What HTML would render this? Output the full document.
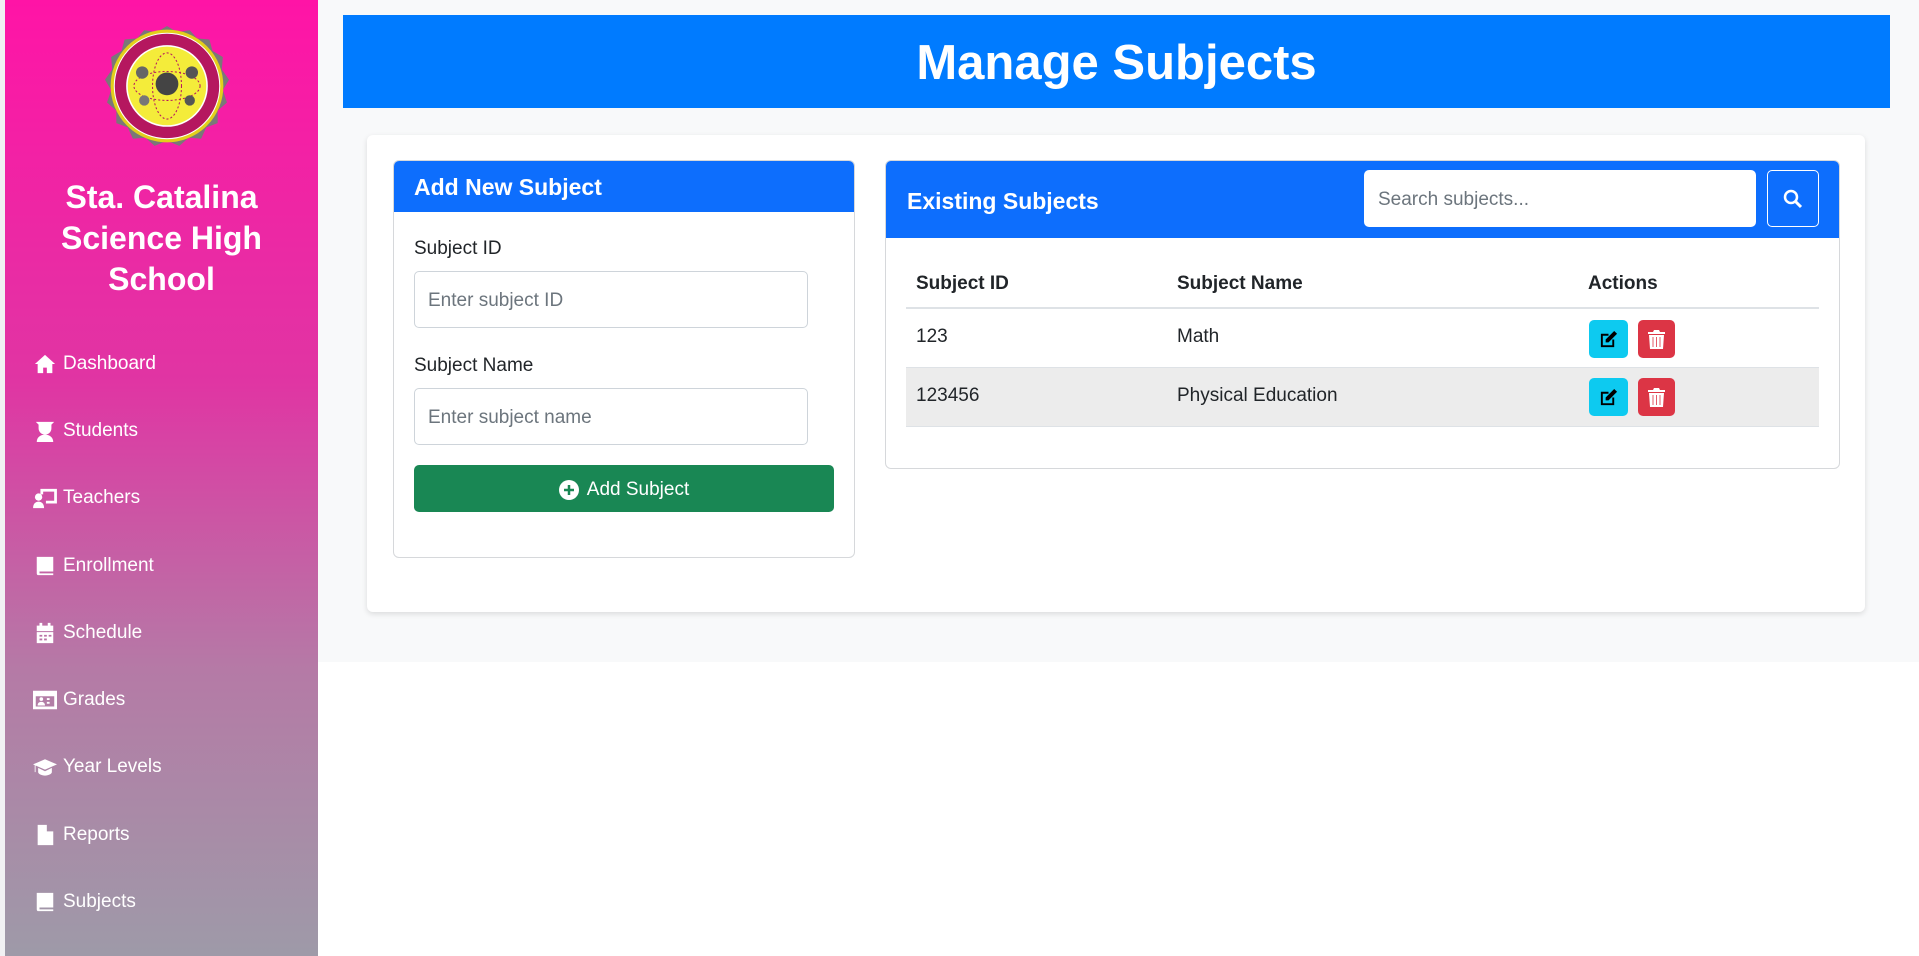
<!DOCTYPE html>
<html><head><meta charset="utf-8"><style>
*{box-sizing:border-box;margin:0;padding:0}
body{width:1919px;height:956px;overflow:hidden;background:#fff;font-family:"Liberation Sans",sans-serif;position:relative;color:#212529}
.strip{position:absolute;left:0;top:0;width:5px;height:956px;background:#f1f1f3}
.side{position:absolute;left:5px;top:0;width:313px;height:956px;background:linear-gradient(#ff14a6,#e035a3 40%,#b57aa6 70%,#9e9aa8)}
.side h2{position:absolute;top:177px;left:0;width:313px;text-align:center;color:#fff;font-size:32px;line-height:41px;font-weight:bold}
.nav{position:absolute;left:33px;color:#fff;font-size:19px;display:flex;align-items:center;gap:6px}
.nav svg{width:24px;height:22px;fill:#fff;flex:none}
.mainbg{position:absolute;left:318px;top:0;width:1601px;height:662px;background:#f8f9fa}
.hdr{position:absolute;left:343px;top:15px;width:1547px;height:93px;background:#007bff;color:#fff;font-size:49px;font-weight:bold;text-align:center;line-height:96px}
.card{position:absolute;left:367px;top:135px;width:1498px;height:477px;background:#fff;border-radius:6px;box-shadow:0 2px 6px rgba(0,0,0,.12)}
.c{position:absolute;border:1px solid #d6d8db;border-radius:6px;background:#fff;overflow:hidden}
.ch{background:#0d6efd;color:#fff;font-weight:bold;font-size:23px}
label{position:absolute;left:414px;font-size:19px}
.inp{position:absolute;border:1px solid #ced4da;border-radius:5px;background:#fff;color:#6c757d;font-size:19px;padding-left:13px;padding-top:3px;display:flex;align-items:center}
.btn{position:absolute;border-radius:5px}
.t{position:absolute;font-size:19px}
</style></head><body>
<div class="strip"></div>
<div class="side">
<svg style="position:absolute;left:92px;top:26px" width="140" height="122" viewBox="0 0 128 118">
<polygon points="64,0 74,6 86,4 93,12 105,13 108,24 118,30 117,42 124,52 118,62 122,74 113,82 113,94 102,98 97,109 85,108 76,116 64,111 52,116 43,108 31,109 26,98 15,94 15,82 6,74 10,62 4,52 11,42 10,30 20,24 23,13 35,12 42,4 54,6" fill="#7a7878"/>
<circle cx="64" cy="58" r="53" fill="#fff" stroke="#e3cf1a" stroke-width="3"/>
<circle cx="64" cy="58" r="45" fill="none" stroke="#b5175f" stroke-width="11"/>
<circle cx="64" cy="58" r="38" fill="#f4ec3a"/>
<ellipse cx="64" cy="58" rx="32" ry="14" fill="none" stroke="#b5175f" stroke-dasharray="2 2"/>
<ellipse cx="64" cy="58" rx="14" ry="32" fill="none" stroke="#b5175f" stroke-dasharray="2 2"/>
<circle cx="64" cy="56" r="11" fill="#444"/>
<circle cx="40" cy="45" r="6" fill="#666"/><circle cx="88" cy="45" r="6" fill="#555"/><circle cx="42" cy="72" r="5" fill="#777"/><circle cx="86" cy="72" r="5" fill="#555"/>
</svg>
<h2>Sta. Catalina<br>Science High<br>School</h2>
</div>
<div class="nav" style="top:353px"><svg viewBox="0 0 24 24"><path d="M12 2 1 12h3v10h6v-6h4v6h6V12h3z"/></svg>Dashboard</div>
<div class="nav" style="top:420px"><svg viewBox="0 0 24 24"><path d="M2 2h20l-3 3v4a7 7 0 0 1-14 0V5zM3 24c0-5 4-8 9-8s9 3 9 8z"/></svg>Students</div>
<div class="nav" style="top:487px"><svg viewBox="0 0 26 24"><circle cx="6" cy="11" r="4"/><path d="M0 23c0-5 3-7 6-7s6 2 6 7zM8 2h18v16H14v-3h9V5H11v3H8z"/></svg>Teachers</div>
<div class="nav" style="top:555px"><svg viewBox="0 0 24 24"><path d="M3 2h18v16H6v2h15v2H5a2 2 0 0 1-2-2zM7 6h10v2H7zm0 4h10v2H7z"/></svg>Enrollment</div>
<div class="nav" style="top:622px"><svg viewBox="0 0 24 24"><path d="M6 1h3v3h6V1h3v3h3v6H3V4h3zM3 11h18v12H3zm3 3v2h3v-2zm5 0v2h3v-2zm5 0v2h3v-2zm-10 4v2h3v-2zm5 0v2h3v-2z"/></svg>Schedule</div>
<div class="nav" style="top:689px"><svg viewBox="0 0 26 22"><path d="M0 1h26v20H0zM3 7v11h20V7zm2 10c0-3 2-4 4-4s4 1 4 4zm4-5a2 2 0 1 1 0-4 2 2 0 0 1 0 4zm6-3h3v2h-3zm0 4h3v2h-3z"/></svg>Grades</div>
<div class="nav" style="top:756px"><svg viewBox="0 0 28 22"><path d="M14 2 0 8l14 6 14-6zM6 12v5c0 2 4 4 8 4s8-2 8-4v-5l-8 4zM2 9v8h1V9z"/></svg>Year Levels</div>
<div class="nav" style="top:824px"><svg viewBox="0 0 20 24"><path d="M2 1h10l7 7v15H2zm10 0v7h7zM5 12h10v2H5zm0 4h10v2H5z"/></svg>Reports</div>
<div class="nav" style="top:891px"><svg viewBox="0 0 24 24"><path d="M3 2h18v16H6v2h15v2H5a2 2 0 0 1-2-2zM7 6h10v2H7zm0 4h10v2H7z"/></svg>Subjects</div>

<div class="mainbg"></div>
<div class="hdr">Manage Subjects</div>
<div class="card"></div>

<div class="c" style="left:393px;top:160px;width:462px;height:398px">
<div class="ch" style="height:51px;line-height:53px;padding-left:20px">Add New Subject</div>
</div>
<label style="top:238px">Subject ID</label>
<div class="inp" style="left:414px;top:271px;width:394px;height:57px">Enter subject ID</div>
<label style="top:355px">Subject Name</label>
<div class="inp" style="left:414px;top:388px;width:394px;height:57px">Enter subject name</div>
<div class="btn" style="left:414px;top:465px;width:420px;height:47px;background:#198754;color:#fff;font-size:19px;display:flex;align-items:center;justify-content:center;gap:8px;padding-top:2px"><svg width="20" height="20" viewBox="0 0 20 20"><circle cx="10" cy="10" r="10" fill="#fff"/><path d="M10 5v10M5 10h10" stroke="#198754" stroke-width="2.5"/></svg>Add Subject</div>

<div class="c" style="left:885px;top:160px;width:955px;height:309px">
<div class="ch" style="height:77px;line-height:80px;padding-left:21px">Existing Subjects</div>
</div>
<div class="inp" style="left:1364px;top:170px;width:392px;height:57px;border-color:#fff">Search subjects...</div>
<div class="btn" style="left:1767px;top:170px;width:52px;height:57px;border:1px solid #fff;display:flex;align-items:center;justify-content:center"><svg width="20" height="20" viewBox="0 0 20 20"><circle cx="8" cy="8" r="6" fill="none" stroke="#fff" stroke-width="2.5"/><path d="M12.5 12.5 18 18" stroke="#fff" stroke-width="3"/></svg></div>

<div style="position:absolute;left:906px;top:307px;width:913px;height:2px;background:#dee2e6"></div>
<div style="position:absolute;left:906px;top:367px;width:913px;height:60px;background:#ececec;border-top:1px solid #dee2e6;border-bottom:1px solid #dee2e6"></div>
<div class="t" style="left:916px;top:273px;font-weight:bold">Subject ID</div>
<div class="t" style="left:1177px;top:273px;font-weight:bold">Subject Name</div>
<div class="t" style="left:1588px;top:273px;font-weight:bold">Actions</div>
<div class="t" style="left:916px;top:326px">123</div>
<div class="t" style="left:1177px;top:326px">Math</div>
<div class="t" style="left:916px;top:385px">123456</div>
<div class="t" style="left:1177px;top:385px">Physical Education</div>

<div class="btn" style="left:1589px;top:320px;width:39px;height:38px;background:#0dcaf0"><svg style="margin:10px" width="19" height="19" viewBox="0 0 20 20"><path d="M2 4h8v2H4v10h10v-6h2v8H2z" fill="#000"/><path d="M16 1l3 3-9 9H7v-3z" fill="#000"/></svg></div>
<div class="btn" style="left:1638px;top:320px;width:37px;height:38px;background:#dc3545"><svg style="margin:10px 10px" width="17" height="19" viewBox="0 0 17 19"><path d="M0 2h5l1-2h5l1 2h5v2H0zM1 5h15l-1 14H2z" fill="#fff"/><path d="M5 7v10M8.5 7v10M12 7v10" stroke="#dc3545" stroke-width=".8"/></svg></div>
<div class="btn" style="left:1589px;top:378px;width:39px;height:38px;background:#0dcaf0"><svg style="margin:10px" width="19" height="19" viewBox="0 0 20 20"><path d="M2 4h8v2H4v10h10v-6h2v8H2z" fill="#000"/><path d="M16 1l3 3-9 9H7v-3z" fill="#000"/></svg></div>
<div class="btn" style="left:1638px;top:378px;width:37px;height:38px;background:#dc3545"><svg style="margin:10px 10px" width="17" height="19" viewBox="0 0 17 19"><path d="M0 2h5l1-2h5l1 2h5v2H0zM1 5h15l-1 14H2z" fill="#fff"/><path d="M5 7v10M8.5 7v10M12 7v10" stroke="#dc3545" stroke-width=".8"/></svg></div>
</body></html>
